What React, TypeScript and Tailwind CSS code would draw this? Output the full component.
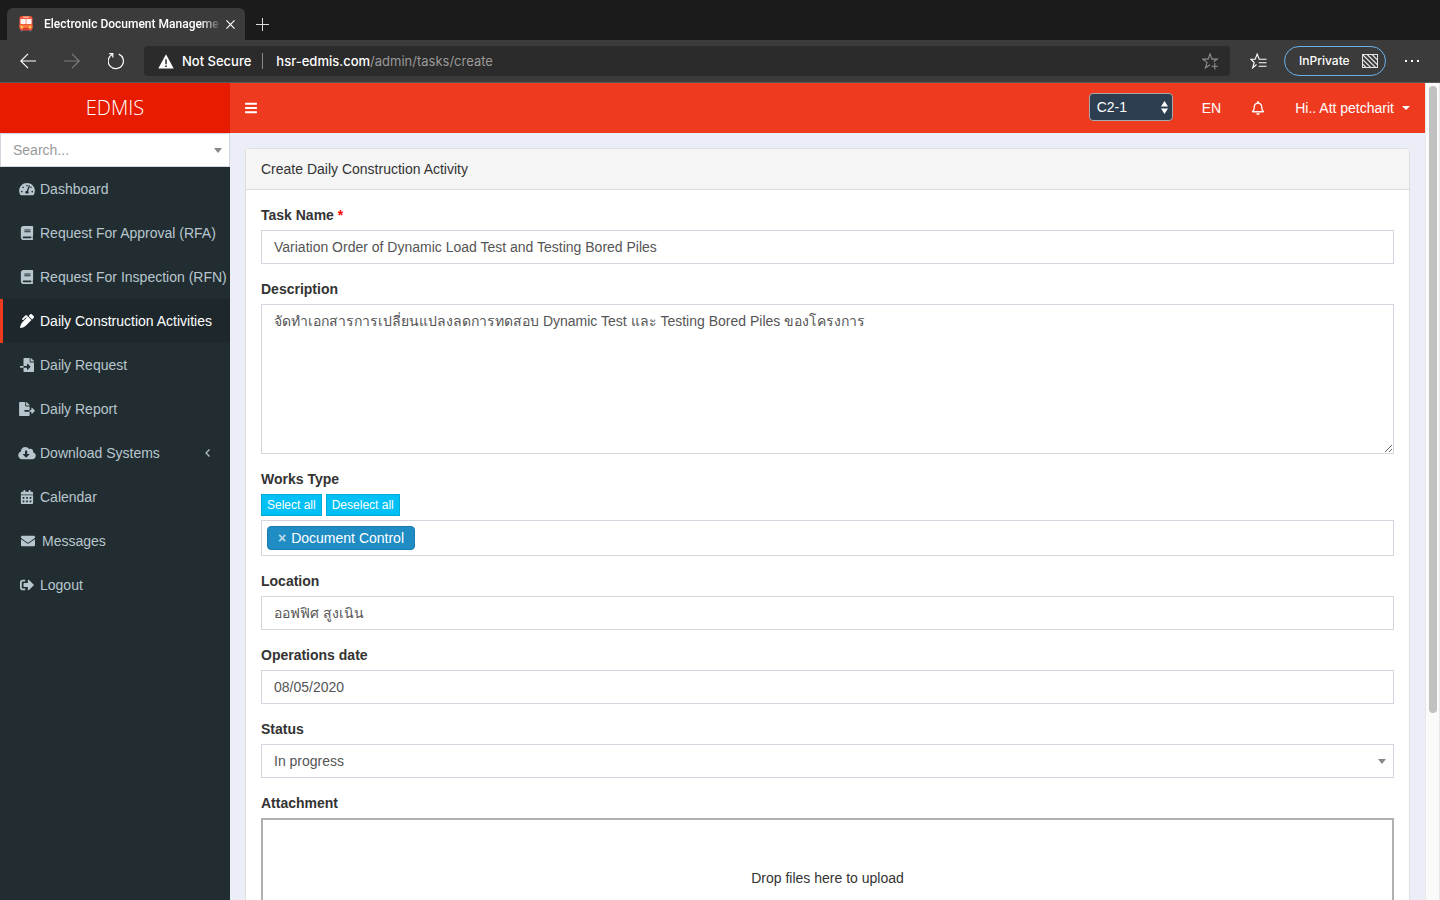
import type { ComponentType, ReactNode } from 'react';
import {
  FaBars, FaBook, FaCalendarAlt, FaCloudDownloadAlt, FaEnvelope,
  FaFileExport, FaFileImport, FaPenAlt, FaRegBell, FaSignOutAlt, FaTachometerAlt,
} from 'react-icons/fa';

type NavItem = {
  label: string;
  icon: ComponentType<{ className?: string }>;
  active?: boolean;
  expandable?: boolean;
  wideIcon?: boolean;
};

const navItems: NavItem[] = [
  { label: 'Dashboard', icon: FaTachometerAlt },
  { label: 'Request For Approval (RFA)', icon: FaBook },
  { label: 'Request For Inspection (RFN)', icon: FaBook },
  { label: 'Daily Construction Activities', icon: FaPenAlt, active: true },
  { label: 'Daily Request', icon: FaFileImport },
  { label: 'Daily Report', icon: FaFileExport },
  { label: 'Download Systems', icon: FaCloudDownloadAlt, expandable: true },
  { label: 'Calendar', icon: FaCalendarAlt },
  { label: 'Messages', icon: FaEnvelope, wideIcon: true },
  { label: 'Logout', icon: FaSignOutAlt },
];

function TrainIcon() {
  return (
    <svg viewBox="0 0 16 18" className="h-[18px] w-4 shrink-0" aria-hidden="true">
      <path d="M4.5 14.5 3 17.2M11.5 14.5l1.5 2.7" stroke="#3f6484" strokeWidth="1.3" />
      <rect x="1.5" y="1" width="13" height="14.5" rx="2.5" fill="#f4553c" />
      <rect x="5" y="1.4" width="6" height="1.6" rx=".5" fill="#ffb08e" />
      <rect x="2.5" y="4" width="5.2" height="5" rx="0.6" fill="#fdf6f2" />
      <rect x="8.3" y="4" width="5.2" height="5" rx="0.6" fill="#fdf6f2" />
      <rect x="1.5" y="9.8" width="13" height="2.6" fill="#fb7a3e" />
      <circle cx="4" cy="12.2" r="1.2" fill="#ffd257" />
      <circle cx="12" cy="12.2" r="1.2" fill="#ffd257" />
      <rect x="5" y="13.3" width="6" height="1.4" fill="#c93a2c" />
    </svg>
  );
}

function SelectArrow() {
  return (
    <svg
      viewBox="0 0 8 5"
      className="pointer-events-none absolute inset-y-0 right-2 my-auto h-[5px] w-2"
      fill="#888"
      aria-hidden="true"
    >
      <path d="M0 0h8L4 5z" />
    </svg>
  );
}

function TabStrip() {
  return (
    <div className="flex h-10 shrink-0 items-end bg-[#1b1b1b] pl-[7px]">
      <div className="flex h-8 w-[238px] items-center rounded-t-md bg-[#3b3b3b] pr-[7px] pl-[11px] text-white">
        <TrainIcon />
        <span className="ml-2.5 flex-1 font-[Roboto,sans-serif] text-xs font-medium whitespace-nowrap [mask-image:linear-gradient(to_right,black_88%,transparent)]">
          Electronic Document Manageme
        </span>
        <button type="button" aria-label="Close tab" className="flex size-4 items-center justify-center">
          <svg viewBox="0 0 10 10" className="size-[9px]" stroke="currentColor" strokeWidth="1.3" aria-hidden="true">
            <path d="M.5.5l9 9M9.5.5l-9 9" />
          </svg>
        </button>
      </div>
      <button type="button" aria-label="New tab" className="flex h-8 w-[35px] items-center justify-center text-[#dcdcdc]">
        <svg viewBox="0 0 13 13" className="size-[13px]" stroke="currentColor" aria-hidden="true">
          <path d="M6.5 0v13M0 6.5h13" />
        </svg>
      </button>
    </div>
  );
}

function AddressBar() {
  return (
    <div className="flex h-[43px] shrink-0 items-center border-b border-[#5a5a5a] bg-[#3b3b3b] px-5 text-white">
      <button type="button" aria-label="Back" className="w-11">
        <svg viewBox="0 0 16 16" className="size-4" fill="none" stroke="currentColor" strokeWidth="1.2" aria-hidden="true">
          <path d="M16 8H1M8 .8.8 8 8 15.2" />
        </svg>
      </button>
      <button type="button" aria-label="Forward" className="w-11 text-[#7d7d7d]">
        <svg viewBox="0 0 16 16" className="size-4" fill="none" stroke="currentColor" strokeWidth="1.2" aria-hidden="true">
          <path d="M0 8h15M8 .8 15.2 8 8 15.2" />
        </svg>
      </button>
      <button type="button" aria-label="Reload" className="w-9">
        <svg viewBox="1 0 18 18" className="size-[18px]" fill="none" stroke="currentColor" strokeWidth="1.2" aria-hidden="true">
          <path d="M11.8 2.1A7.6 7.6 0 1 1 5 2.5M2.2 1.6h3.6v3.8" />
        </svg>
      </button>
      <div className="flex h-[30px] flex-1 items-center rounded bg-[#2b2b2b] pr-[11px] pl-3.5 text-[13px] leading-5">
        <svg viewBox="0 0 16 15" className="h-[15px] w-4 shrink-0" aria-hidden="true">
          <path d="M8 .3 15.7 14.6H.3z" fill="#fff" />
          <path d="M8 5.2v5" stroke="#2b2b2b" strokeWidth="1.5" />
          <circle cx="8" cy="12.2" r=".9" fill="#2b2b2b" />
        </svg>
        <span className="ml-2 font-medium">Not Secure</span>
        <span className="mr-[13px] ml-[11px] h-4 border-l border-[#8a8a8a]" />
        <span className="flex-1 text-[#9a9a9a]">
          <span className="font-medium text-white">hsr-edmis.com</span>/admin/tasks/create
        </span>
        <button type="button" aria-label="Add to favourites" className="text-[#8f8f8f]">
          <svg viewBox="0 0 17 17" className="size-[17px]" fill="none" stroke="currentColor" strokeWidth="1.1" aria-hidden="true">
            <path d="M8 11.8 3.4 15l1.7-5.6L.8 6.1h5.3L8 .9l1.9 5.2h5.3l-3.5 2.7M9.5 13.3h6.5M12.8 10v6.6" />
          </svg>
        </button>
      </div>
      <button type="button" aria-label="Favourites" className="ml-5 flex w-[17px]">
        <svg viewBox="0 0 17 16" className="h-4 w-[17px]" fill="none" stroke="currentColor" strokeWidth="1.1" aria-hidden="true">
          <path d="M6.5 11.5 2.7 14.8l1.5-5.3L.8 6.2h4.4L7.2 1l2 5.2h7.3M8.7 9.8h7.8M8.7 13.3h7.8" />
        </svg>
      </button>
      <button
        type="button"
        className="ml-[17px] flex h-[30px] w-[102px] items-center justify-between rounded-full border border-[#6cb2ea] pr-[7px] pl-3.5 text-xs font-medium"
      >
        InPrivate
        <svg viewBox="0 0 16 14" className="h-3.5 w-4" fill="none" stroke="#e4e4e4" aria-hidden="true">
          <rect x=".5" y=".5" width="15" height="13" />
          <path d="M0 9.5 4.5 14M0 4.8 9.2 14M.5.5 14 14M5.2.5 16 11.3M10 .5l6 6" strokeWidth="1.2" />
        </svg>
      </button>
      <button type="button" aria-label="More" className="ml-[18px] flex w-4 justify-between px-px">
        <span className="size-0.5 bg-white" />
        <span className="size-0.5 bg-white" />
        <span className="size-0.5 bg-white" />
      </button>
    </div>
  );
}

function Sidebar() {
  return (
    <aside className="flex w-[230px] shrink-0 flex-col bg-[#222d32]">
      <a
        href="#home"
        className="flex h-[50px] items-center justify-center bg-[#e61b00] font-['Open_Sans',sans-serif] text-xl font-light text-white"
      >
        EDMIS
      </a>
      <div className="relative">
        <input
          type="search"
          aria-label="Search"
          placeholder="Search..."
          className="block h-[34px] w-full border border-[#d2d6de] bg-white px-3 text-sm placeholder:text-[#999]"
        />
        <SelectArrow />
      </div>
      <nav>
        <ul>
          {navItems.map(({ label, icon: Icon, active, expandable, wideIcon }) => (
            <li key={label}>
              <a
                href="#nav"
                className={
                  active
                    ? 'flex h-11 items-center gap-px border-l-3 border-[#ee3a1f] bg-[#1e282c] pl-3 text-white'
                    : 'flex h-11 items-center gap-px border-l-3 border-transparent pl-3 text-[#b8c7ce]'
                }
              >
                <span className={wideIcon ? 'flex w-[26px] shrink-0 justify-center' : 'flex w-6 shrink-0 justify-center'}>
                  <Icon className="h-3.5 w-[18px]" />
                </span>
                <span className="flex-1 whitespace-nowrap">{label}</span>
                {expandable && (
                  <svg viewBox="0 0 5 8" className="mr-5 h-2 w-[5px]" fill="none" stroke="currentColor" strokeWidth="1.2" aria-hidden="true">
                    <path d="M4.5.5 1 4l3.5 3.5" />
                  </svg>
                )}
              </a>
            </li>
          ))}
        </ul>
      </nav>
    </aside>
  );
}

function TopNav() {
  return (
    <header className="flex h-[50px] shrink-0 items-center bg-[#ee3a1f] px-[15px] text-white">
      <button type="button" aria-label="Toggle navigation">
        <FaBars className="h-3.5 w-3" />
      </button>
      <div className="relative mb-0.5 ml-auto">
        <select
          aria-label="Contract"
          className="block h-7 w-[84px] appearance-none rounded border border-[#a9a9a9] bg-[#2c3e50] pl-[7px] text-sm text-white"
        >
          <option>C2-1</option>
        </select>
        <svg viewBox="0 0 7 13" className="pointer-events-none absolute inset-y-0 right-[5px] my-auto h-[13px] w-[7px]" fill="#fff" aria-hidden="true">
          <path d="M3.5 0 7 5.5H0zM3.5 13 7 7.5H0z" />
        </svg>
      </div>
      <a href="#lang" className="ml-[29px]">EN</a>
      <button type="button" aria-label="Notifications" className="ml-[30px]">
        <FaRegBell className="size-3.5" />
      </button>
      <button type="button" className="ml-[30px] flex items-center gap-2">
        Hi.. Att petcharit
        <svg viewBox="0 0 8 4" className="h-1 w-2" fill="currentColor" aria-hidden="true">
          <path d="M0 0h8L4 4z" />
        </svg>
      </button>
    </header>
  );
}

const control = 'block w-full border border-[#d2d6de] bg-white px-3 text-sm text-[#555]';

function Field({ id, label, required, children }: { id: string; label: string; required?: boolean; children: ReactNode }) {
  return (
    <div className="mb-[15px]">
      <label htmlFor={id} className="mb-[5px] block w-fit font-bold">
        {label}
        {required && <span className="text-[#f00]"> *</span>}
      </label>
      {children}
    </div>
  );
}

function TaskForm() {
  return (
    <section className="rounded-t border border-[#ddd] bg-white">
      <h1 className="border-b border-[#ddd] bg-[#f5f5f5] px-[15px] py-2.5">Create Daily Construction Activity</h1>
      <form className="p-[15px]">
        <Field id="name" label="Task Name" required>
          <input
            id="name"
            className={`${control} h-[34px]`}
            defaultValue="Variation Order of Dynamic Load Test and Testing Bored Piles"
          />
        </Field>
        <Field id="description" label="Description">
          <textarea
            id="description"
            className={`${control} h-[150px] resize-y py-1.5 leading-5`}
            defaultValue="จัดทำเอกสารการเปลี่ยนแปลงลดการทดสอบ Dynamic Test และ Testing Bored Piles ของโครงการ"
          />
        </Field>
        <Field id="works" label="Works Type">
          <div className="mb-1 flex gap-1 text-xs text-white">
            <button type="button" className="h-[22px] border border-[#00acd6] bg-[#00c0f5] px-[5px]">Select all</button>
            <button type="button" className="h-[22px] border border-[#00acd6] bg-[#00c0f5] px-[5px]">Deselect all</button>
          </div>
          <div className="flex h-9 items-center border border-[#d2d6de] px-[5px]">
            <span className="flex h-6 items-center gap-[5px] rounded border border-[#1a7cb0] bg-[#1f8dc4] px-2.5 text-white">
              <button type="button" aria-label="Remove Document Control" className="font-bold text-white/70">×</button>
              Document Control
            </span>
            <input id="works" className="ml-1 min-w-0 flex-1 outline-none" />
          </div>
        </Field>
        <Field id="location" label="Location">
          <input id="location" className={`${control} h-[34px]`} defaultValue="ออฟฟิศ สูงเนิน" />
        </Field>
        <Field id="date" label="Operations date">
          <input id="date" className={`${control} h-[34px]`} defaultValue="08/05/2020" />
        </Field>
        <Field id="status" label="Status">
          <div className="relative">
            <select id="status" className={`${control} h-[34px] appearance-none`}>
              <option>In progress</option>
            </select>
            <SelectArrow />
          </div>
        </Field>
        <Field id="attachment" label="Attachment">
          <button id="attachment" type="button" className="block w-full border-2 border-[#b0b0b0] bg-white px-5 py-12">
            Drop files here to upload
          </button>
        </Field>
      </form>
    </section>
  );
}

export default function App() {
  return (
    <div className="flex h-screen flex-col overflow-hidden font-[Inter,'Liberation_Sans',sans-serif]">
      <TabStrip />
      <AddressBar />
      <div className="flex min-h-0 flex-1 font-['Liberation_Sans',Arial,sans-serif] text-sm leading-5 text-[#333]">
        <Sidebar />
        <div className="flex min-w-0 flex-1 flex-col bg-[#ebeef6]">
          <TopNav />
          <main className="min-h-0 flex-1 overflow-hidden p-[15px]">
            <TaskForm />
          </main>
        </div>
        <div className="w-[15px] shrink-0 border-x border-[#e8e8e8] bg-[#fafafa] px-[3px] pt-[3px]">
          <div className="ml-auto h-[77%] w-2 rounded-full bg-[#c1c1c1]" />
        </div>
      </div>
    </div>
  );
}
